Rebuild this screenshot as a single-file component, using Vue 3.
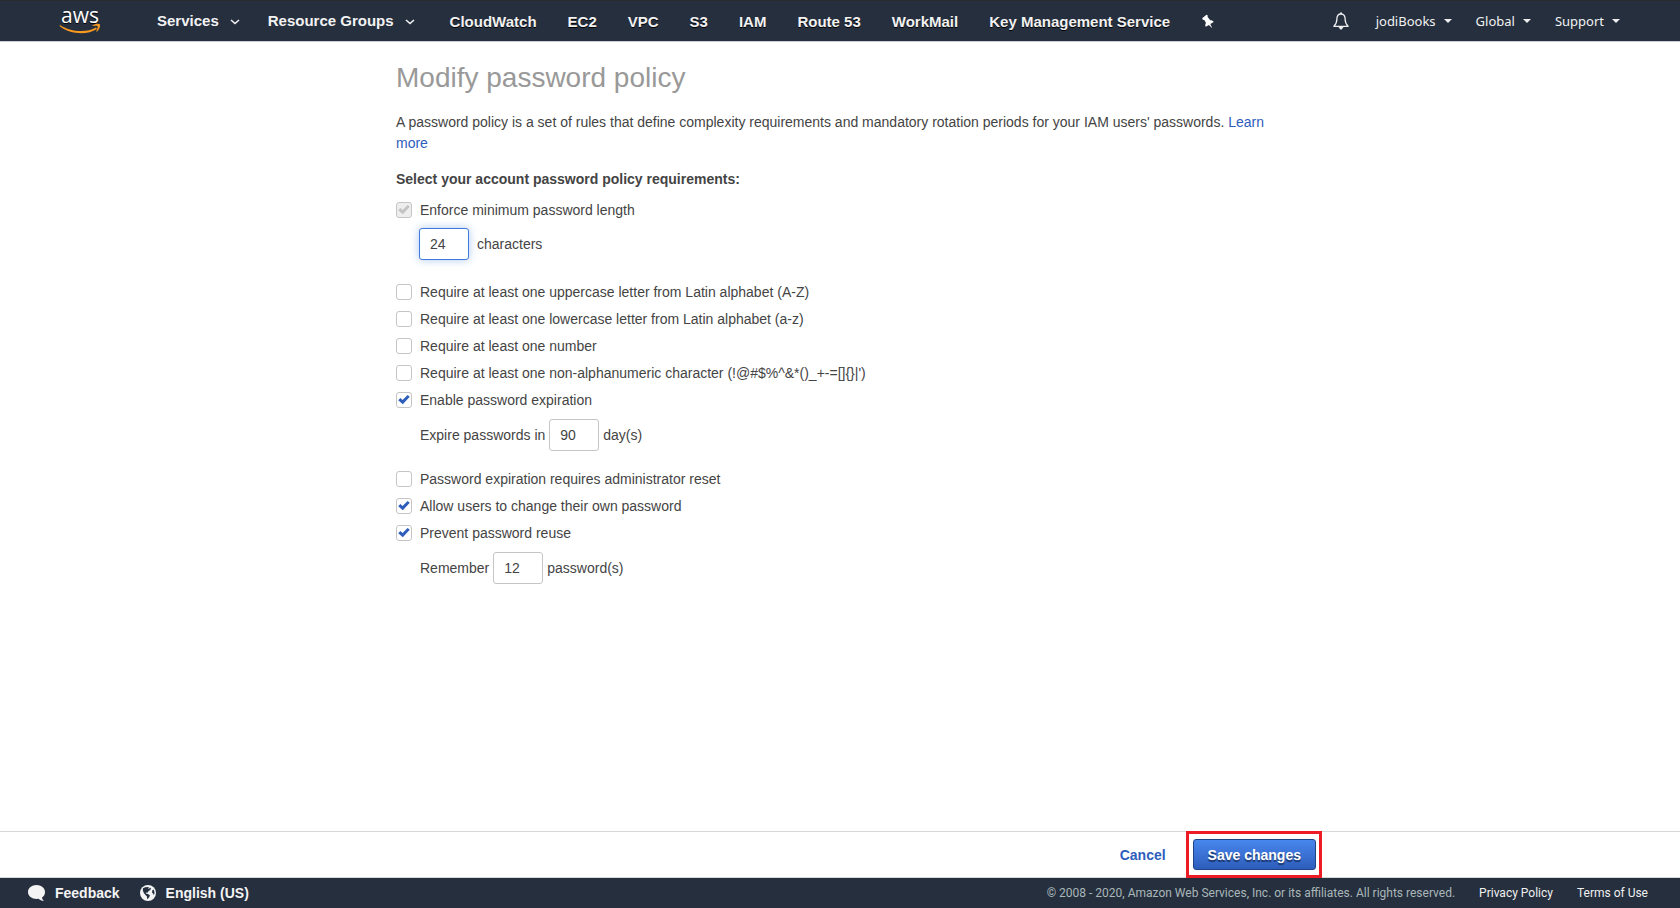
<script setup>
import { reactive } from 'vue'

const shortcuts = ['CloudWatch', 'EC2', 'VPC', 'S3', 'IAM', 'Route 53', 'WorkMail', 'Key Management Service']
const accountMenus = ['jodiBooks', 'Global', 'Support']

const policy = reactive({
  minLength: true,
  length: '24',
  uppercase: false,
  lowercase: false,
  number: false,
  symbol: false,
  expire: true,
  expireDays: '90',
  adminReset: false,
  selfChange: true,
  preventReuse: true,
  remember: '12',
})

const characterRules = [
  { key: 'uppercase', label: 'Require at least one uppercase letter from Latin alphabet (A-Z)' },
  { key: 'lowercase', label: 'Require at least one lowercase letter from Latin alphabet (a-z)' },
  { key: 'number', label: 'Require at least one number' },
  { key: 'symbol', label: "Require at least one non-alphanumeric character (!@#$%^&*()_+-=[]{}|')" },
  { key: 'expire', label: 'Enable password expiration' },
]
const usageRules = [
  { key: 'adminReset', label: 'Password expiration requires administrator reset' },
  { key: 'selfChange', label: 'Allow users to change their own password' },
  { key: 'preventReuse', label: 'Prevent password reuse' },
]
</script>

<template>
  <div class="page">
    <header class="topbar">
      <a class="logo" href="#" aria-label="AWS home">
        <svg width="44" height="40" viewBox="0 -4 44 40">
          <text x="2" y="18" class="logo-text">aws</text>
          <path d="M1 20 C11 27 28 28 37 22.500 L38 24 C28 30.500 11 29.500 0.500 21 Z" fill="#f7981f" />
          <path d="M33.500 20.300 C36 18.400 39.500 18.300 41 19.200 C41.500 21.500 40 25 37.800 26.800 L37.200 26.400 C38.300 24 39 22 38.600 21 C37.500 20.400 35.500 20.700 33.700 20.900 Z" fill="#f7981f" />
        </svg>
      </a>
      <nav class="menus" aria-label="Services">
        <button type="button" class="menu">
          Services
          <svg class="chevron" width="10" height="6" viewBox="0 0 10 6"><path d="M1 1 L5 4.500 L9 1" /></svg>
        </button>
        <button type="button" class="menu">
          Resource Groups
          <svg class="chevron" width="10" height="6" viewBox="0 0 10 6"><path d="M1 1 L5 4.500 L9 1" /></svg>
        </button>
      </nav>
      <nav class="shortcuts" aria-label="Shortcuts">
        <a v-for="name in shortcuts" :key="name" href="#">{{ name }}</a>
        <button type="button" class="icon-button" aria-label="Edit shortcuts">
          <svg width="14" height="16" viewBox="0 0 14 16" fill="#fff">
            <path d="M5.500 0.800 L6.800 1.500 L6.600 3 L9.300 6.300 C10.700 6.200 12 6.700 12.700 7.900 L9.300 10 L11.300 14.200 L7.900 10.900 L4.700 12.800 C4 11.500 4.200 10.200 5 9.100 L3.300 6 L1.800 5.800 L1.200 4.200 Z" />
          </svg>
        </button>
      </nav>
      <div class="account">
        <button type="button" class="icon-button bell" aria-label="Notifications">
          <svg width="18" height="18" viewBox="0 0 18 18" fill="none" stroke="#eee" stroke-width="1.300">
            <path d="M9 2 C6 2 4.900 4 4.900 7 C4.900 10.500 4 12.200 1.900 14.300 L16.100 14.300 C14 12.200 13.100 10.500 13.100 7 C13.100 4 12 2 9 2 Z" stroke-linejoin="round" />
            <path d="M9 0.500 V2" stroke-width="2" />
            <path d="M6.500 15 H11.500 L9.700 17.500 H8.300 Z" fill="#eee" stroke="none" />
          </svg>
        </button>
        <button v-for="name in accountMenus" :key="name" type="button" class="account-menu">
          {{ name }}
          <svg width="8" height="4" viewBox="0 0 8 4" fill="#eee"><path d="M0 0 H8 L4 4 Z" /></svg>
        </button>
      </div>
    </header>

    <main class="content">
      <h1>Modify password policy</h1>
      <p class="intro">
        A password policy is a set of rules that define complexity requirements and mandatory rotation periods for your IAM users' passwords.
        <a href="#">Learn more</a>
      </p>
      <form id="policy" @submit.prevent>
        <h2>Select your account password policy requirements:</h2>
        <label class="check">
          <input v-model="policy.minLength" type="checkbox" disabled />
          Enforce minimum password length
        </label>
        <div class="field wide">
          <input id="length" v-model="policy.length" class="active" type="text" />
          <label for="length">characters</label>
        </div>
        <label v-for="rule in characterRules" :key="rule.key" class="check">
          <input v-model="policy[rule.key]" type="checkbox" />
          {{ rule.label }}
        </label>
        <div class="field">
          <label for="days">Expire passwords in</label>
          <input id="days" v-model="policy.expireDays" type="text" />
          <span>day(s)</span>
        </div>
        <label v-for="rule in usageRules" :key="rule.key" class="check">
          <input v-model="policy[rule.key]" type="checkbox" />
          {{ rule.label }}
        </label>
        <div class="field">
          <label for="remember">Remember</label>
          <input id="remember" v-model="policy.remember" type="text" />
          <span>password(s)</span>
        </div>
      </form>
    </main>

    <div class="actions">
      <div class="actions-inner">
        <button type="button" class="cancel">Cancel</button>
        <div class="highlight">
          <button type="submit" form="policy" class="save">Save changes</button>
        </div>
      </div>
    </div>

    <footer class="footer">
      <button type="button" class="footer-button">
        <svg width="17" height="16" viewBox="0 0 17 16" fill="#f4f4f4">
          <path d="M8.500 0 C13.200 0 17 3 17 6.900 C17 9.300 15.900 11.300 14 12.500 C14.200 14 14.900 15 16 16 C13.600 15.800 11.700 15 10.500 13.800 C4.500 14.500 0 11.300 0 6.900 C0 3 3.800 0 8.500 0 Z" />
        </svg>
        Feedback
      </button>
      <button type="button" class="footer-button">
        <svg width="16" height="16" viewBox="0 0 16 16">
          <circle cx="8" cy="8" r="8" fill="#f4f4f4" />
          <path d="M3 3.200 L5.200 2.200 L9 2 L8 3.400 L9.200 3.700 L10 2.500 L11.200 3.800 L9.500 5.500 L8.200 6.600 L7.600 7.800 L6.400 7.400 L5.800 8 L6.500 8.800 L8 9.100 L9.900 10.200 L9.300 12 L7.800 14 L7.100 13.500 L7 11.500 L5.500 10 L3.800 7.900 L2.800 5.200 Z M12.300 5.300 L13.500 4.600 L14.300 6.200 L14.500 8.500 L13.900 10 L13 8.600 L12 7.400 Z" fill="#252f3e" />
        </svg>
        English (US)
      </button>
      <div class="legal">
        <span>© 2008 - 2020, Amazon Web Services, Inc. or its affiliates. All rights reserved.</span>
        <a href="#">Privacy Policy</a>
        <a href="#">Terms of Use</a>
      </div>
    </footer>
  </div>
</template>

<style>
body {
  margin: 0;
  background: #fff;
}
</style>

<style scoped>
.page {
  min-height: 100vh;
  display: flex;
  flex-direction: column;
  font-family: "Liberation Sans", Arial, sans-serif;
  font-size: 14px;
  line-height: 20px;
  color: #444;
}
.page *,
.page {
  box-sizing: border-box;
}
button {
  padding: 0;
  border: 0;
  background: none;
  font: inherit;
  color: inherit;
  cursor: pointer;
}
a {
  color: #2e5dbc;
  text-decoration: none;
}
svg {
  flex: none;
}

.topbar {
  display: flex;
  align-items: center;
  height: 42px;
  padding: 0 60px 0 59px;
  border-top: 1px solid #2a2a2a;
  border-bottom: 1px solid #c9ccd0;
  background: #252f3e;
  color: #f2f2f2;
  font-size: 15px;
  font-weight: bold;
  text-shadow: 0 1px 0 #000;
  white-space: nowrap;
}
.logo {
  display: flex;
  margin-right: 54px;
}
.logo svg {
  overflow: visible;
}
.logo-text {
  fill: #fff;
  font-family: "Open Sans", sans-serif;
  font-size: 21px;
  font-weight: 500;
}
.menus {
  display: flex;
  gap: 28px;
  padding-bottom: 1px;
}
.menu {
  display: flex;
  align-items: center;
  gap: 11px;
}
.chevron {
  margin-top: 3px;
  fill: none;
  stroke: #f2f2f2;
  stroke-width: 1.6;
}
.shortcuts {
  display: flex;
  align-items: center;
  gap: 31px;
  margin-left: 35px;
  padding-top: 1px;
}
.shortcuts a {
  color: inherit;
}
.icon-button {
  display: flex;
}
.account {
  display: flex;
  align-items: center;
  gap: 24px;
  margin-left: auto;
  font-family: "Noto Sans", "Open Sans", sans-serif;
  font-size: 13px;
  font-weight: 400;
}
.bell {
  margin-right: 2px;
}
.account-menu {
  display: flex;
  align-items: center;
  gap: 8px;
}

.content {
  flex: 1;
  width: 100%;
  max-width: 888px;
  margin: 0 auto;
  padding-top: 19px;
}
h1 {
  margin: 0 0 17px;
  font-size: 28px;
  line-height: 34px;
  font-weight: 400;
  color: #999;
}
.intro {
  margin: 0 0 15px;
  line-height: 21px;
}
h2 {
  margin: 0 0 7px;
  font-size: 14px;
  line-height: 20px;
  font-weight: bold;
}
.check {
  display: flex;
  align-items: center;
  gap: 8px;
  width: fit-content;
  height: 27px;
}
.check input {
  appearance: none;
  display: flex;
  width: 16px;
  height: 16px;
  margin: 0;
  border: 1px solid #c5c5c5;
  border-radius: 3px;
  background: #fff;
}
.check input:checked::before {
  content: "";
  flex: 1;
  margin: 2px 1px;
  background: #2e5dbc;
  clip-path: polygon(2% 58%, 20% 36%, 38% 54%, 80% 4%, 98% 22%, 40% 98%);
}
.check input:disabled {
  background: #eee;
}
.check input:disabled::before {
  background: #c3c3c3;
}
.field {
  display: flex;
  align-items: center;
  gap: 4px;
  margin: 6px 0 14px 24px;
}
.field.wide {
  gap: 8px;
  margin: 5px 0 18px 23px;
}
.field input {
  width: 50px;
  height: 32px;
  padding: 0 10px;
  border: 1px solid #c5c5c5;
  border-radius: 3px;
  background: #fff;
  font: inherit;
  color: #444;
}
.field input.active {
  border-color: #3b7add;
  box-shadow: 0 0 8px rgba(59, 122, 221, 0.4);
}

.actions {
  border-top: 1px solid #d5d9d9;
  border-bottom: 1px solid #d5d9d9;
}
.actions-inner {
  display: flex;
  align-items: center;
  justify-content: flex-end;
  gap: 20px;
  max-width: 964px;
  margin: -1px auto;
}
.cancel {
  color: #2e5dbc;
  font-weight: bold;
}
.highlight {
  padding: 5px 3px 5px 4px;
  border: 3px solid #ed1c24;
}
.save {
  display: block;
  height: 31px;
  padding: 0 14px;
  border: 1px solid #1f4486;
  border-radius: 3px;
  background: linear-gradient(#4887ed, #2e5dbc);
  color: #fff;
  font-weight: bold;
  text-shadow: 0 2px 1px rgba(0, 0, 0, 0.5);
}

.footer {
  display: flex;
  align-items: center;
  gap: 20px;
  height: 30px;
  padding: 0 32px 0 28px;
  background: #252f3e;
  color: #f4f4f4;
  text-shadow: 0 1px 0 #000;
  white-space: nowrap;
}
.footer-button {
  display: flex;
  align-items: center;
  gap: 10px;
  font-weight: bold;
}
.legal {
  display: flex;
  gap: 24px;
  margin-left: auto;
  font-family: Roboto, sans-serif;
  font-size: 12px;
  color: #aab7b8;
  text-shadow: none;
}
.legal a {
  color: #f0f0f0;
}
</style>
